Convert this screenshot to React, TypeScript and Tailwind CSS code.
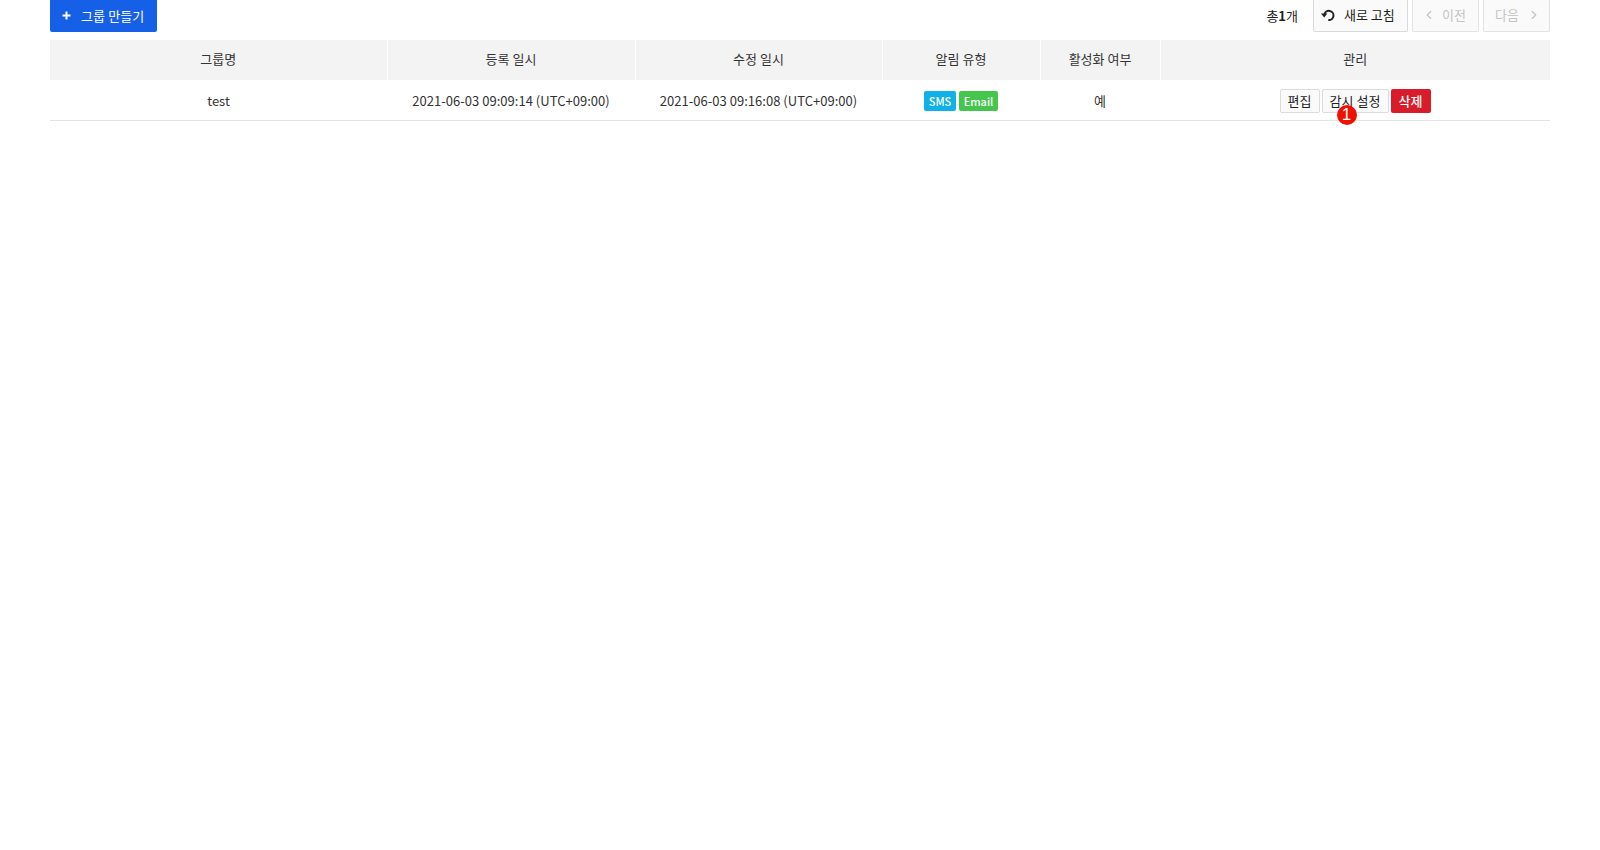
import { ChevronLeft, ChevronRight } from 'lucide-react'

const headers = ['그룹명', '등록 일시', '수정 일시', '알림 유형', '활성화 여부', '관리']

const App = () => {
  return (
    <div className="min-h-[850px] bg-white px-[50px] text-[13px] text-[#333] font-['Noto_Sans_CJK_KR','Noto_Sans',sans-serif]">
      <div className="flex h-[40px] items-start justify-between">
        <button className="flex h-[32px] w-[107px] items-center rounded-b-[2px] bg-[#1660e8] pb-[1px] pl-[12px] text-white">
          <svg width="9" height="9" viewBox="0 0 9 9" fill="none" stroke="currentColor" strokeWidth="2">
            <path d="M4.5 0.5v8M0.5 4.5h8" />
          </svg>
          <span className="ml-[10px] tracking-[0.1px]">그룹 만들기</span>
        </button>
        <div className="flex items-center">
          <span className="mr-[15px] pb-[1px] text-[#222]">
            총<b>1</b>개
          </span>
          <button className="flex h-[32px] w-[95px] items-center rounded-b-[2px] border border-t-0 border-[#d9d9d9] bg-[#fafafa] pb-[1px] pl-[7px] text-[#222]">
            <svg width="15" height="14" viewBox="0 0 15 14" fill="none">
              <path d="M3.4 6.6a4.6 4.6 0 1 1 3.9 5.4" stroke="currentColor" strokeWidth="2" />
              <path d="M0 5.4h6.4L3.2 9.4z" fill="currentColor" />
            </svg>
            <span className="ml-[8px]">새로 고침</span>
          </button>
          <button className="ml-[4px] flex h-[32px] w-[67px] items-center rounded-b-[2px] border border-t-0 border-[#e2e2e2] bg-[#fafafa] pb-[1px] pl-[9px] text-[#c4c4c4]">
            <ChevronLeft size={14} />
            <span className="ml-[6px]">이전</span>
          </button>
          <button className="ml-[4px] flex h-[32px] w-[67px] items-center rounded-b-[2px] border border-t-0 border-[#e2e2e2] bg-[#fafafa] pb-[1px] pl-[11px] text-[#c4c4c4]">
            <span>다음</span>
            <ChevronRight size={14} className="ml-[8px]" />
          </button>
        </div>
      </div>

      <table className="w-[1500px] table-fixed border-collapse">
        <colgroup>
          <col className="w-[337px]" />
          <col className="w-[248px]" />
          <col className="w-[247px]" />
          <col className="w-[158px]" />
          <col className="w-[120px]" />
          <col className="w-[390px]" />
        </colgroup>
        <thead>
          <tr className="h-[40px] bg-[#f3f3f3]">
            {headers.map((h, i) => (
              <th
                key={h}
                className={`pb-[2px] font-normal ${i < headers.length - 1 ? 'border-r border-white' : ''}`}
              >
                {h}
              </th>
            ))}
          </tr>
        </thead>
        <tbody>
          <tr className="h-[40px] border-b border-[#e3e3e3] text-center">
            <td className="pt-[1px]">test</td>
            <td className="pt-[1px] tracking-[0.03px]">2021-06-03 09:09:14 (UTC+09:00)</td>
            <td className="pt-[1px] tracking-[0.03px]">2021-06-03 09:16:08 (UTC+09:00)</td>
            <td>
              <div className="flex justify-center gap-[3px] pt-[2px]">
                <span className="flex h-[20px] w-[32px] items-center justify-center rounded-[2px] bg-[#10b1e6] text-[11px] font-medium text-white">
                  SMS
                </span>
                <span className="flex h-[20px] w-[39px] items-center justify-center rounded-[2px] bg-[#44c64c] text-[11px] font-medium text-white">
                  Email
                </span>
              </div>
            </td>
            <td className="pt-[1px]">예</td>
            <td>
              <div className="flex justify-center gap-[2px] pt-[2px]">
                <button className="h-[24px] w-[40px] rounded-[2px] border border-[#dcdcdc] bg-[#fafafa] pb-[1px] text-[#222]">
                  편집
                </button>
                <div className="relative">
                  <button className="h-[24px] w-[67px] rounded-[2px] border border-[#dcdcdc] bg-[#fafafa] pb-[1px] text-[#222]">
                    감시 설정
                  </button>
                  <span className="absolute left-[15px] top-[16px] flex h-[20px] w-[20px] items-center justify-center rounded-full bg-[#ee1100] font-['Liberation_Sans',sans-serif] text-[17px] leading-none text-white">
                    1
                  </span>
                </div>
                <button className="h-[24px] w-[40px] rounded-[2px] bg-[#d91c29] pb-[1px] font-medium text-white">
                  삭제
                </button>
              </div>
            </td>
          </tr>
        </tbody>
      </table>
    </div>
  )
}

export default App
